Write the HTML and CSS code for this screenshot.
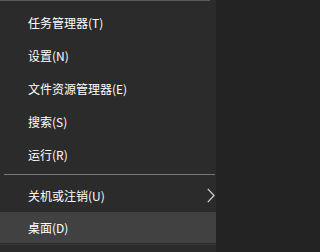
FILE: index.html
```html
<!DOCTYPE html>
<html lang="zh-CN">
<head>
<meta charset="utf-8">
<link rel="stylesheet" href="styles.css">
</head>
<body>
<div class="menu">
  <div class="top-line"></div>
  <ul class="list">
    <li class="item">任务管理器(T)</li>
    <li class="item">设置(N)</li>
    <li class="item">文件资源管理器(E)</li>
    <li class="item">搜索(S)</li>
    <li class="item">运行(R)</li>
    <li class="sep"></li>
    <li class="item has-sub">关机或注销(U)
      <svg class="chev" width="8" height="15" viewBox="0 0 8 15"><polyline points="0.8,0.8 7,7.5 0.8,14.2" fill="none" stroke="#d6d6d6" stroke-width="1.2"/></svg>
    </li>
    <li class="item active">桌面(D)</li>
  </ul>
  <div class="bottom-line"></div>
</div>
</body>
</html>
```

FILE: styles.css
```css
html, body {
  margin: 0;
  padding: 0;
  background: #232323;
  height: 100%;
}
body {
  font-family: "Noto Sans CJK SC", "Noto Sans", sans-serif;
  font-size: 12px;
  color: #ffffff;
}
.menu {
  width: 216px;
  height: 252px;
  background: #2b2b2b;
  overflow: hidden;
}
.top-line {
  height: 1px;
  width: 210px;
  background: #595959;
  margin-bottom: 5px;
}
.list {
  list-style: none;
  margin: 0;
  padding: 0;
}
.item {
  height: 33px;
  display: flex;
  align-items: center;
  padding-left: 28px;
  position: relative;
  line-height: 1;
}
.sep {
  height: 1px;
  margin: 3px 1px 4px 4px;
  background: #777777;
}
.has-sub .chev {
  position: absolute;
  right: 1px;
  top: 9px;
}
.item.active {
  height: 31px;
  background: #414141;
}
.bottom-line {
  height: 1px;
  margin-top: 1px;
  background: #383838;
}
```
